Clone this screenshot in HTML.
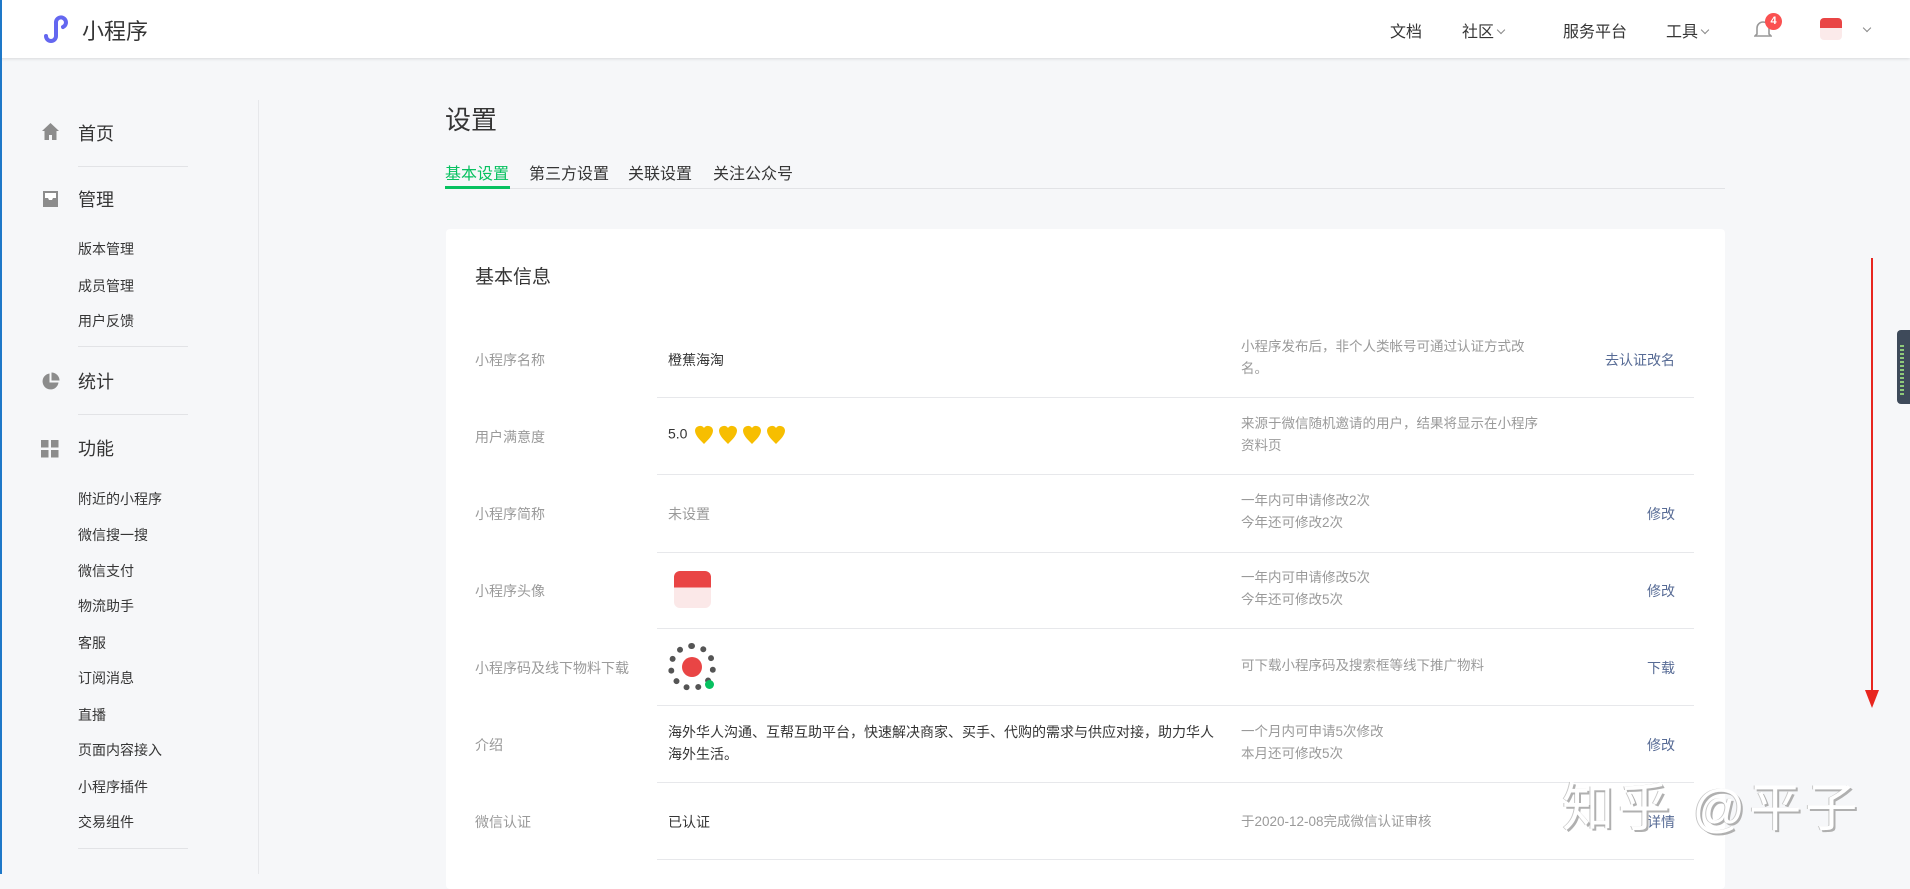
<!DOCTYPE html>
<html><head><meta charset="utf-8"><style>
*{margin:0;padding:0;box-sizing:border-box}
body{width:1910px;height:874px;overflow:hidden;background:#f6f7f9;font-family:"Liberation Sans","Noto Sans CJK SC",sans-serif;position:relative;color:#353535}
.hdr{position:absolute;left:0;top:0;width:1910px;height:58px;background:#fff;box-shadow:0 1px 3px rgba(0,0,0,.12)}
.ab{position:absolute;white-space:nowrap}
.lb{position:absolute;left:0;top:0;width:2px;height:874px;background:#1e78c8;z-index:5}
.nav{font-size:16px;color:#353535;top:18px}
.chev{display:inline-block;width:6px;height:6px;border-right:1px solid #888;border-bottom:1px solid #888;transform:rotate(45deg);margin-left:4px;position:relative;top:-4px}
.side{position:absolute;left:258px;top:100px;width:1px;height:774px;background:#e7e8eb}
.mi{font-size:18px;color:#353535;left:78px}
.si{font-size:14px;color:#353535;left:78px}
.dv{position:absolute;left:78px;width:110px;height:1px;background:#e2e3e6}
.card{position:absolute;left:446px;top:229px;width:1279px;height:660px;background:#fff;border-radius:4px}
.lab{font-size:14px;color:#9a9a9a;left:475px}
.val{font-size:14px;color:#353535;left:668px}
.desc{font-size:13.5px;color:#9a9a9a;left:1241px;line-height:22px}
.act{font-size:14px;color:#576b95;right:235px}
.sep{position:absolute;left:657px;width:1037px;height:1px;background:#e7e8eb}
.ht{display:inline-block;vertical-align:middle;margin-right:5px}
</style></head><body>
<div class="lb"></div>
<div class="hdr"></div>
<svg class="ab" style="left:41px;top:14px" width="32" height="30" viewBox="0 0 32 30"><path d="M5 22a5 5 0 1 0 10 0V9a5 5 0 1 1 7 4" fill="none" stroke="#6467f0" stroke-width="4" stroke-linecap="round"/></svg>
<div class="ab" style="left:82px;top:14px;font-size:22px;color:#353535">小程序</div>
<div class="ab nav" style="left:1390px">文档</div>
<div class="ab nav" style="left:1462px">社区<span class="chev"></span></div>
<div class="ab nav" style="left:1563px">服务平台</div>
<div class="ab nav" style="left:1666px">工具<span class="chev"></span></div>
<svg class="ab" style="left:1754px;top:19px" width="18" height="20" viewBox="0 0 18 20"><path d="M3 15V9a6 6 0 0 1 12 0v6l2 2H1z" fill="none" stroke="#999" stroke-width="1.6"/></svg>
<div class="ab" style="left:1765px;top:13px;width:17px;height:17px;border-radius:50%;background:#fa5151;color:#fff;font-size:11px;text-align:center;line-height:17px;font-weight:bold">4</div>
<div class="ab" style="left:1820px;top:18px;width:22px;height:22px;border-radius:4px;background:linear-gradient(#e94545 45%,#fbeaea 45%)"></div>
<div class="ab" style="left:1860px;top:22px"><span class="chev"></span></div>

<div class="side"></div>
<svg class="ab" style="left:41px;top:122px" width="19" height="19" viewBox="0 0 19 19"><path d="M9.5 1L1 9h2.5v9h4.5v-5h3v5h4.5V9H18z" fill="#8c8c8c"/></svg>
<div class="ab mi" style="top:120px">首页</div>
<div class="dv" style="top:166px"></div>
<svg class="ab" style="left:41px;top:190px" width="19" height="18" viewBox="0 0 19 18"><path d="M2 1h15v16H2z" fill="#8c8c8c"/><path d="M4 3h11v5h-3l-1 2H8L7 8H4z" fill="#fff"/></svg>
<div class="ab mi" style="top:186px">管理</div>
<div class="ab si" style="top:239px">版本管理</div>
<div class="ab si" style="top:276px">成员管理</div>
<div class="ab si" style="top:311px">用户反馈</div>
<div class="dv" style="top:346px"></div>
<svg class="ab" style="left:41px;top:372px" width="19" height="19" viewBox="0 0 19 19"><path d="M8.5 1.5A8 8 0 1 0 17.5 10.5H8.5z" fill="#8c8c8c"/><path d="M10.5 0.5v8h8a8 8 0 0 0-8-8z" fill="#8c8c8c"/></svg>
<div class="ab mi" style="top:368px">统计</div>
<div class="dv" style="top:414px"></div>
<svg class="ab" style="left:41px;top:440px" width="18" height="18" viewBox="0 0 18 18" fill="#8c8c8c"><rect x="0" y="0" width="7.5" height="7.5"/><rect x="10" y="0" width="7.5" height="7.5"/><rect x="0" y="10" width="7.5" height="7.5"/><rect x="10" y="10" width="7.5" height="7.5"/></svg>
<div class="ab mi" style="top:435px">功能</div>
<div class="ab si" style="top:489px">附近的小程序</div>
<div class="ab si" style="top:525px">微信搜一搜</div>
<div class="ab si" style="top:561px">微信支付</div>
<div class="ab si" style="top:596px">物流助手</div>
<div class="ab si" style="top:633px">客服</div>
<div class="ab si" style="top:668px">订阅消息</div>
<div class="ab si" style="top:705px">直播</div>
<div class="ab si" style="top:740px">页面内容接入</div>
<div class="ab si" style="top:777px">小程序插件</div>
<div class="ab si" style="top:812px">交易组件</div>
<div class="dv" style="top:848px"></div>

<div class="ab" style="left:445px;top:100px;font-size:26px;color:#353535">设置</div>
<div class="ab" style="left:445px;top:188px;width:1280px;height:1px;background:#e2e3e6"></div>
<div class="ab" style="left:445px;top:160px;font-size:16px;color:#07c160">基本设置</div>
<div class="ab" style="left:445px;top:186px;width:65px;height:3px;background:#07c160"></div>
<div class="ab" style="left:529px;top:160px;font-size:16px">第三方设置</div>
<div class="ab" style="left:628px;top:160px;font-size:16px">关联设置</div>
<div class="ab" style="left:713px;top:160px;font-size:16px">关注公众号</div>

<div class="card"></div>
<div class="ab" style="left:475px;top:262px;font-size:19px">基本信息</div>

<div class="ab lab" style="top:350px">小程序名称</div>
<div class="ab val" style="top:350px">橙蕉海淘</div>
<div class="ab desc" style="top:336px">小程序发布后，非个人类帐号可通过认证方式改<br>名。</div>
<div class="ab act" style="top:350px">去认证改名</div>
<div class="sep" style="top:397px"></div>

<div class="ab lab" style="top:427px">用户满意度</div>
<div class="ab val" style="top:425px">5.0&nbsp;&nbsp;<svg class="ht" width="104" height="20" viewBox="0 0 104 20"><g fill="#f7be00"><path id="h" d="M9 19C4 14 0 10 0 5.5A5 5 0 0 1 9 3a5 5 0 0 1 9 2.5C18 10 14 14 9 19z"/><use href="#h" x="24"/><use href="#h" x="48"/><use href="#h" x="72"/></g></svg></div>
<div class="ab desc" style="top:413px">来源于微信随机邀请的用户，结果将显示在小程序<br>资料页</div>
<div class="sep" style="top:474px"></div>

<div class="ab lab" style="top:504px">小程序简称</div>
<div class="ab val" style="top:504px;color:#9a9a9a">未设置</div>
<div class="ab desc" style="top:490px">一年内可申请修改2次<br>今年还可修改2次</div>
<div class="ab act" style="top:504px">修改</div>
<div class="sep" style="top:552px"></div>

<div class="ab lab" style="top:581px">小程序头像</div>
<div class="ab" style="left:674px;top:571px;width:37px;height:37px;border-radius:6px;background:linear-gradient(#e94545 45%,#fbe8e8 45%)"></div>
<div class="ab desc" style="top:567px">一年内可申请修改5次<br>今年还可修改5次</div>
<div class="ab act" style="top:581px">修改</div>
<div class="sep" style="top:628px"></div>

<div class="ab lab" style="top:658px">小程序码及线下物料下载</div>
<div class="ab" style="left:668px;top:643px;width:48px;height:48px;border-radius:50%;border:6px dotted #555;background:#fff"></div>
<div class="ab" style="left:682px;top:657px;width:20px;height:20px;border-radius:50%;background:#e94545"></div>
<div class="ab" style="left:705px;top:680px;width:9px;height:9px;border-radius:50%;background:#07c160"></div>
<div class="ab desc" style="top:655px">可下载小程序码及搜索框等线下推广物料</div>
<div class="ab act" style="top:658px">下载</div>
<div class="sep" style="top:705px"></div>

<div class="ab lab" style="top:735px">介绍</div>
<div class="ab val" style="top:721px;line-height:22px">海外华人沟通、互帮互助平台，快速解决商家、买手、代购的需求与供应对接，助力华人<br>海外生活。</div>
<div class="ab desc" style="top:721px">一个月内可申请5次修改<br>本月还可修改5次</div>
<div class="ab act" style="top:735px">修改</div>
<div class="sep" style="top:782px"></div>

<div class="ab lab" style="top:812px">微信认证</div>
<div class="ab val" style="top:812px">已认证</div>
<div class="ab desc" style="top:811px">于2020-12-08完成微信认证审核</div>
<div class="ab act" style="top:812px">详情</div>
<div class="sep" style="top:859px"></div>

<div class="ab" style="left:1562px;top:766px;font-size:52px;color:#fff;text-shadow:2px 2px 0 #b0b0b0,-1px 0 0 #c8c8c8;letter-spacing:4px">知乎 @平子</div>

<div class="ab" style="left:1871px;top:258px;width:2px;height:440px;background:#e8261f"></div>
<div class="ab" style="left:1865px;top:690px;width:0;height:0;border-left:7px solid transparent;border-right:7px solid transparent;border-top:18px solid #e8261f"></div>
<div class="ab" style="left:1897px;top:330px;width:13px;height:74px;border-radius:4px 0 0 4px;background:#3e4a5a"></div>
<div class="ab" style="left:1900px;top:345px;width:4px;height:52px;background:repeating-linear-gradient(#8fc97a 0 2px,#3e4a5a 2px 4px)"></div>
</body></html>
